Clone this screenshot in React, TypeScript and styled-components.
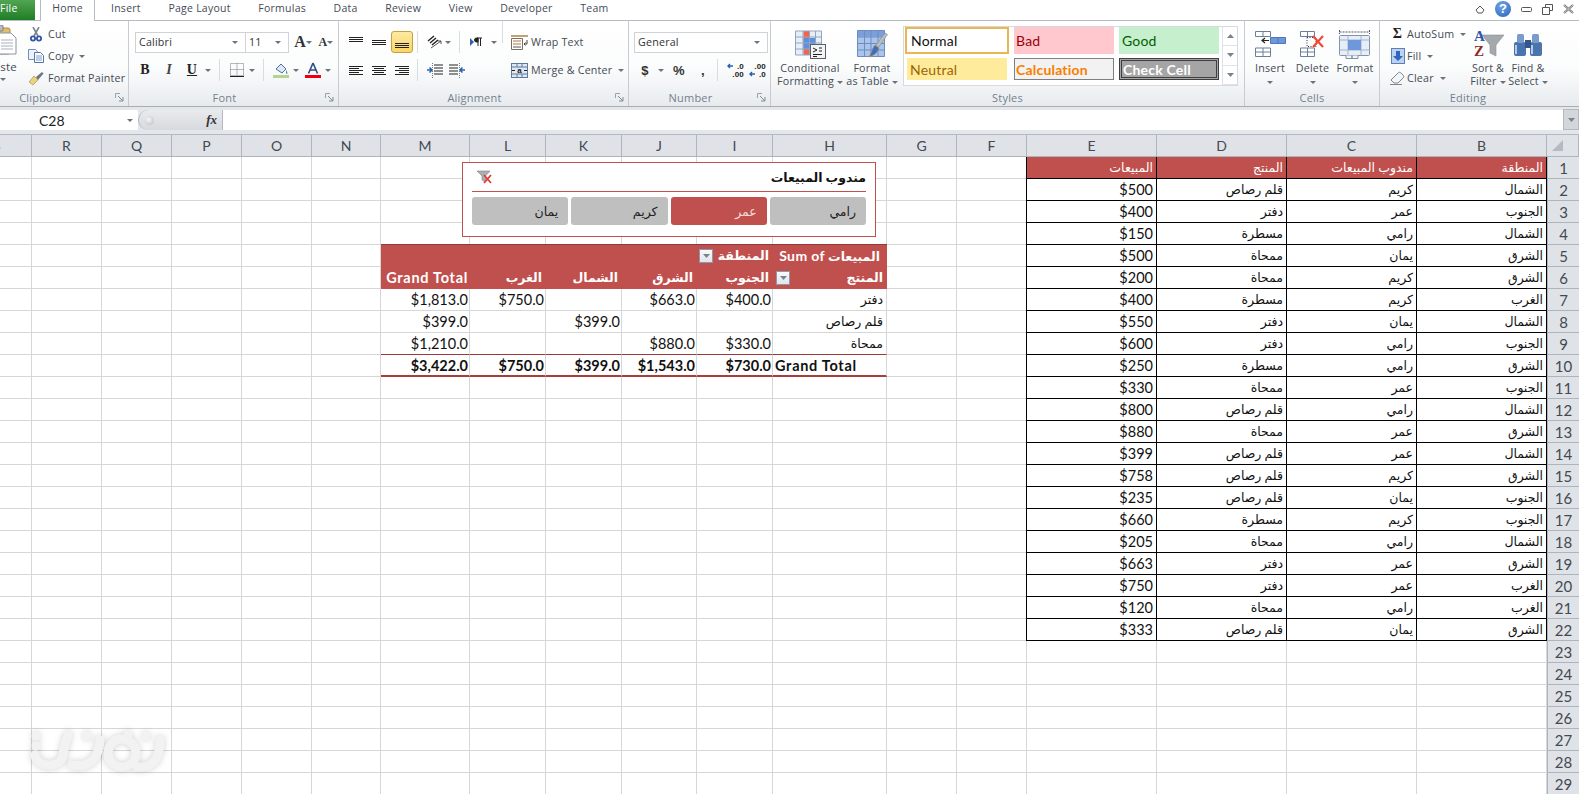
import React from "react"
import styled, { createGlobalStyle } from "styled-components"

const GlobalStyle = createGlobalStyle`
  html, body {
    margin: 0;
    height: 100%;
    overflow: hidden;
    background: #fff;
    font-family: "Open Sans", "Noto Sans", sans-serif;
  }
`

const Window = styled.div`
  width: 1579px;
  height: 794px;
  overflow: hidden;
  display: flex;
  flex-direction: column;
  color: #444b55;
`

/* ---------- tabs ---------- */
const TabBar = styled.div`
  height: 21px;
  flex: none;
  box-sizing: border-box;
  display: flex;
  align-items: stretch;
  border-bottom: 1px solid #b7bcc3;
  font-size: 10.5px;
  letter-spacing: 0.25px;
`
const FileTab = styled.div`
  width: 35px;
  height: 20px;
  color: #fff;
  line-height: 17px;
  background: linear-gradient(#53a553, #1e7d25);
  margin-right: 5px;
`
const HomeTab = styled.div`
  width: 55px;
  height: 21px;
  box-sizing: border-box;
  text-align: center;
  line-height: 17px;
  background: #fff;
  border: 1px solid #b7bcc3;
  border-top: none;
  border-bottom: none;
  margin-right: 16px;
`
const TabList = styled.div`
  display: flex;
  gap: 27.6px;
  line-height: 17px;
`
const WindowControls = styled.div`
  margin-left: auto;
  display: flex;
  align-items: center;
  gap: 10px;
  padding-right: 5px;
  height: 18px;
`
const HelpBadge = styled.div`
  width: 16px;
  height: 16px;
  border-radius: 50%;
  background: radial-gradient(circle at 40% 30%, #6fa5e6, #2a63b8);
  color: #fff;
  font: bold 13px/16px "Liberation Sans", sans-serif;
  text-align: center;
`

/* ---------- ribbon ---------- */
const Ribbon = styled.div`
  height: 86px;
  flex: none;
  display: flex;
  background: linear-gradient(#fff 0%, #fbfcfc 55%, #e8ebee 100%);
  border-bottom: 1px solid #a9adb2;
  box-sizing: border-box;
  font-size: 10.7px;
  letter-spacing: 0.2px;
`
const Group = styled.div<{ $w: number; $ml?: number; $last?: boolean }>`
  width: ${({ $w }) => $w}px;
  margin-left: ${({ $ml }) => $ml ?? 0}px;
  flex: none;
  box-sizing: border-box;
  display: flex;
  flex-direction: column;
  border-right: ${({ $last }) => ($last ? "none" : "1px solid #c8ccd2")};
`
const GroupBody = styled.div`
  flex: 1;
  display: flex;
  min-height: 0;
`
const GroupFoot = styled.div`
  height: 17px;
  flex: none;
  display: flex;
  align-items: center;
  color: #73808f;
  font-size: 11px;
`
const FootLabel = styled.div`
  flex: 1;
  text-align: center;
`
const Launcher = styled.div`
  width: 18px;
  display: flex;
  justify-content: center;
`
const StackRows = styled.div<{ $pl?: number; $w?: number }>`
  padding: 10px 0 0 ${({ $pl }) => $pl ?? 6}px;
  width: ${({ $w }) => ($w ? `${$w}px` : "auto")};
  box-sizing: border-box;
  display: flex;
  flex-direction: column;
  gap: 6px;
  flex: none;
`
const ToolRow = styled.div`
  height: 22px;
  display: flex;
  align-items: center;
`
const Slot = styled.div<{ $w: number; $ml?: number; $active?: boolean }>`
  width: ${({ $w }) => $w}px;
  height: 22px;
  margin-left: ${({ $ml }) => $ml ?? 0}px;
  box-sizing: border-box;
  flex: none;
  display: flex;
  align-items: center;
  justify-content: center;
  border-radius: 3px;
  border: ${({ $active }) => ($active ? "1px solid #c2a045" : "none")};
  background: ${({ $active }) => ($active ? "linear-gradient(#fde9a3, #fbd564)" : "none")};
`
const Sep = styled.div<{ $ml?: number }>`
  width: 1px;
  height: 22px;
  flex: none;
  background: #d9dde1;
  margin-left: ${({ $ml }) => $ml ?? 0}px;
`
const Arrow = styled.i<{ $ml?: number }>`
  display: inline-block;
  flex: none;
  width: 0;
  height: 0;
  margin-left: ${({ $ml }) => $ml ?? 0}px;
  border-left: 3px solid transparent;
  border-right: 3px solid transparent;
  border-top: 3px solid #6a727c;
  vertical-align: middle;
`
const Combo = styled.div<{ $w: number }>`
  width: ${({ $w }) => $w}px;
  height: 21px;
  box-sizing: border-box;
  flex: none;
  display: flex;
  align-items: center;
  justify-content: space-between;
  padding: 0 7px 0 3px;
  border: 1px solid #cfd3d9;
  margin-right: -1px;
  background: #fff;
  color: #333;
  font-size: 10.7px;
`
const GlyphBold = styled.span`
  font: bold 14px "Liberation Serif", serif;
  color: #222;
`
const GlyphItalic = styled(GlyphBold)`
  font-style: italic;
  color: #444;
`
const GlyphUnderline = styled(GlyphBold)`
  text-decoration: underline;
`
const GrowA = styled.span<{ $size: number }>`
  font: bold ${({ $size }) => $size}px "Liberation Serif", serif;
  color: #333;
`
const NumberGlyph = styled.span`
  font: bold 13px "Liberation Sans", sans-serif;
  color: #333;
`
const PasteCol = styled.div`
  width: 32px;
  margin-left: 5px;
  padding-top: 4px;
  flex: none;
  display: flex;
  flex-direction: column;
  align-items: flex-end;
  overflow: hidden;
`
const PasteLabel = styled.div`
  margin-top: 5px;
  line-height: 14px;
  font-size: 11.5px;
`
const PasteArrow = styled.div`
  width: 100%;
  text-align: right;
  padding-right: 11px;
  box-sizing: border-box;
  line-height: 8px;
`
const SmallList = styled.div<{ $ml?: number; $w?: number }>`
  margin-left: ${({ $ml }) => $ml ?? 0}px;
  width: ${({ $w }) => ($w ? `${$w}px` : "auto")};
  padding-top: 2px;
  flex: none;
  display: flex;
  flex-direction: column;
`
const SmallItem = styled.div`
  height: 22px;
  display: flex;
  align-items: center;
  white-space: nowrap;
`
const ItemIcon = styled.div<{ $w: number }>`
  width: ${({ $w }) => $w}px;
  flex: none;
  display: flex;
  justify-content: center;
`
const BlockRight = styled.div`
  padding: 10px 0 0 8px;
  display: flex;
  flex-direction: column;
  gap: 6px;
`
const LongItem = styled.div`
  height: 22px;
  display: flex;
  align-items: center;
  gap: 3px;
  white-space: nowrap;
`
const LargeButton = styled.div<{ $w: number }>`
  width: ${({ $w }) => $w}px;
  flex: none;
  display: flex;
  flex-direction: column;
  align-items: center;
  padding-top: 5px;
`
const LargeIcon = styled.div`
  height: 36px;
  display: flex;
  align-items: center;
`
const LargeLabel = styled.div`
  text-align: center;
  line-height: 13px;
  white-space: nowrap;
`
const Gallery = styled.div`
  width: 335px;
  height: 60px;
  margin-top: 5px;
  box-sizing: border-box;
  flex: none;
  display: flex;
  border: 1px solid #d6dade;
  background: #fff;
`
const GalleryGrid = styled.div`
  flex: 1;
  display: grid;
  grid-template-columns: 104px 100px 100px;
  grid-template-rows: 27px 22px;
  gap: 4px 5px;
  padding: 0 0 0 1px;
`
const GalleryCell = styled.div<{ $bg: string; $fg: string; $pad: number; $edge?: string; $bold?: boolean; $inset?: boolean }>`
  box-sizing: border-box;
  padding-left: ${({ $pad }) => $pad}px;
  margin: ${({ $inset }) => ($inset ? "0 2px" : "0")};
  display: flex;
  align-items: center;
  background: ${({ $bg }) => $bg};
  color: ${({ $fg }) => $fg};
  border: ${({ $edge }) => $edge ?? "none"};
  font: ${({ $bold }) => ($bold ? "bold" : "normal")} 14px Lato, sans-serif;
`
const GalleryScroll = styled.div`
  width: 14px;
  flex: none;
  display: flex;
  flex-direction: column;
  border-left: 1px solid #dfe2e6;
`
const ScrollPart = styled.div`
  height: 20px;
  display: flex;
  align-items: center;
  justify-content: center;
  border-bottom: 1px solid #dfe2e6;
`

/* ---------- formula bar ---------- */
const FormulaBar = styled.div`
  height: 28px;
  flex: none;
  box-sizing: border-box;
  padding: 3px 0 4px;
  display: flex;
  background: #e3e6ea;
  border-bottom: 1px solid #b4b9bf;
`
const NameBox = styled.div`
  width: 138px;
  flex: none;
  background: #fff;
  display: flex;
  align-items: center;
  justify-content: space-between;
  padding: 0 5px 0 39px;
  box-sizing: border-box;
  font: 14px Lato, sans-serif;
  color: #222;
`
const FxZone = styled.div`
  width: 85px;
  flex: none;
  box-sizing: border-box;
  background: linear-gradient(#e9ebee, #d6d9dd);
  border-radius: 10px 0 0 10px;
  border-left: 1px solid #b4b9bf;
  border-right: 1px solid #b4b9bf;
  display: flex;
  align-items: center;
  justify-content: space-between;
  padding: 0 5px 0 6px;
`
const FxKnob = styled.div`
  width: 9px;
  height: 9px;
  border-radius: 50%;
  background: radial-gradient(circle at 40% 40%, #f8f8f8, #b5b8bc);
`
const FxText = styled.span`
  font: italic bold 13px "Liberation Serif", serif;
  color: #333;
`
const FormulaInput = styled.div`
  flex: 1;
  background: #fff;
`
const FormulaDrop = styled.div`
  width: 16px;
  flex: none;
  margin-top: -1px;
  background: #d3d7dc;
  border: 1px solid #b4b9bf;
  box-sizing: border-box;
  display: flex;
  align-items: center;
  justify-content: center;
`

/* ---------- sheet ---------- */
const Sheet = styled.div`
  position: relative;
  flex: 1;
  overflow: hidden;
`
const Grid = styled.div<{ $cols: string }>`
  display: grid;
  grid-template-columns: ${({ $cols }) => $cols};
  grid-template-rows: 22px;
  grid-auto-rows: 22px;
  font: 14.5px Lato, "DejaVu Sans", sans-serif;
  color: #111;
`
const ColHead = styled.div<{ $edge?: boolean }>`
  box-sizing: border-box;
  background: #dfe3e8;
  border-right: 1px solid #aeb4bb;
  border-bottom: 1px solid #aeb4bb;
  display: flex;
  align-items: center;
  justify-content: ${({ $edge }) => ($edge ? "flex-start" : "center")};
  text-indent: ${({ $edge }) => ($edge ? "-7px" : "0")};
  color: #45494f;
  font-size: 14px;
  overflow: hidden;
`
const Corner = styled(ColHead)`
  justify-content: flex-start;
  padding-left: 5px;
`
const RowHead = styled.div`
  box-sizing: border-box;
  background: #dfe3e8;
  border-bottom: 1px solid #aeb4bb;
  border-left: 1px solid #aeb4bb;
  display: flex;
  align-items: center;
  justify-content: center;
  color: #45494f;
  font-size: 15px;
`
type Tone = "plain" | "data" | "dataHead" | "pivotHead" | "pivotTop" | "pivotRule" | "pivotTotal"

const bg = (t: Tone) => (t === "dataHead" || t === "pivotHead" || t === "pivotTop" ? "#c0504d" : "#fff")
const rightLine = (t: Tone) => {
  if (t === "data" || t === "dataHead") return "#000"
  if (t === "pivotHead" || t === "pivotTop") return "#c0504d"
  return "#d6d6d6"
}
const bottomLine = (t: Tone) => {
  if (t === "data" || t === "dataHead") return "1px solid #000"
  if (t === "pivotHead" || t === "pivotTop") return "1px solid #c0504d"
  if (t === "pivotRule") return "1px solid #9c3a38"
  if (t === "pivotTotal") return "2px solid #a53f3c"
  return "1px solid #d6d6d6"
}

const Cell = styled.div<{ $tone: Tone; $left?: boolean; $edge?: boolean; $ar?: boolean; $bold?: boolean; $wide?: boolean }>`
  box-sizing: border-box;
  min-width: 0;
  display: flex;
  align-items: center;
  justify-content: ${({ $left }) => ($left ? "flex-start" : "flex-end")};
  padding: 0 ${({ $ar, $tone }) => ($ar || $tone === "data" ? 3 : 1)}px 0 2px;
  white-space: nowrap;
  background: ${({ $tone }) => bg($tone)};
  color: ${({ $tone }) => ($tone === "dataHead" || $tone === "pivotHead" || $tone === "pivotTop" ? "#fff" : "#111")};
  border-right: 1px solid ${({ $tone }) => rightLine($tone)};
  border-bottom: ${({ $tone }) => bottomLine($tone)};
  box-shadow: ${({ $edge, $tone }) =>
    $edge ? ($tone === "pivotTop" ? "0 -1px 0 #953735" : "-1px 0 0 #000") : "none"};
  font-size: ${({ $ar }) => ($ar ? "12.5px" : "14.5px")};
  font-weight: ${({ $bold, $tone }) => ($bold || $tone === "pivotTotal" ? 700 : 400)};
  letter-spacing: ${({ $wide }) => ($wide ? "0.7px" : "0")};
`
const SumLatin = styled.span`
  font-size: 14px;
  letter-spacing: 0.4px;
`
const FilterButton = styled.span<{ $inset: number }>`
  width: 14px;
  height: 14px;
  margin-left: ${({ $inset }) => $inset}px;
  margin-right: auto;
  flex: none;
  box-sizing: border-box;
  background: linear-gradient(#f8fafc, #dfe5ec);
  border: 1px solid #8d99a8;
  display: flex;
  align-items: center;
  justify-content: center;
`

const Slicer = styled.div`
  position: absolute;
  left: 462px;
  top: 27px;
  width: 414px;
  height: 75px;
  box-sizing: border-box;
  background: #fff;
  border: 1px solid #c0504d;
  padding: 0 9px;
  display: flex;
  flex-direction: column;
  font-family: Lato, "DejaVu Sans", sans-serif;
`
const SlicerHead = styled.div`
  height: 29px;
  flex: none;
  box-sizing: border-box;
  border-bottom: 1px solid #c0504d;
  display: flex;
  align-items: center;
  justify-content: space-between;
  padding: 0 0 0 5px;
  font-size: 12.5px;
  font-weight: 700;
  color: #111;
`
const SlicerButtons = styled.div`
  margin-top: 5px;
  display: grid;
  grid-template-columns: repeat(4, 1fr);
  gap: 3px;
`
const SlicerButton = styled.div<{ $on?: boolean }>`
  height: 28px;
  border-radius: 3px;
  display: flex;
  align-items: center;
  justify-content: flex-end;
  padding-right: 10px;
  font-size: 12.5px;
  background: ${({ $on }) => ($on ? "#c0504d" : "#bfbfbf")};
  color: ${({ $on }) => ($on ? "#f6dcdb" : "#222")};
`
const Watermark = styled.svg`
  position: absolute;
  left: 26px;
  top: 585px;
  filter: drop-shadow(0 0 3px rgba(0, 0, 0, 0.18));
`

/* ---------- icons ---------- */
const PasteIcon = () => (
  <svg width="32" height="30" viewBox="0 0 32 30">
    <rect x="1" y="3" width="24" height="26" rx="2" fill="#e3bd6b" stroke="#a98a4a" />
    <rect x="8" y="0" width="10" height="6" rx="1" fill="#b9bcc2" stroke="#7d8087" />
    <path d="M13 8h13l5 5v16H13z" fill="#fff" stroke="#8b94a1" />
    <path d="M16 15h12M16 18h12M16 21h12M16 24h12" stroke="#a9b1bd" />
  </svg>
)
const CutIcon = () => (
  <svg width="12" height="15" viewBox="0 0 12 15">
    <path d="M3 0l5 9M9 0L4 9" stroke="#7b8490" strokeWidth="1.6" />
    <circle cx="3" cy="11.5" r="2.1" fill="none" stroke="#2f56a8" strokeWidth="1.8" />
    <circle cx="9" cy="11.5" r="2.1" fill="none" stroke="#2f56a8" strokeWidth="1.8" />
  </svg>
)
const CopyIcon = () => (
  <svg width="16" height="14" viewBox="0 0 16 14">
    <path d="M.5.5h7l2 2v8h-9z" fill="#eef3fa" stroke="#6f8fbb" />
    <path d="M6.5 3.5h6l3 3v7h-9z" fill="#fff" stroke="#5277ad" />
    <path d="M8 7h6M8 9h6M8 11h6" stroke="#7f9cc6" />
  </svg>
)
const BrushIcon = () => (
  <svg width="16" height="15" viewBox="0 0 16 15">
    <path d="M1 11l5-6 4 4-5 5z" fill="#ecd27c" stroke="#a9945a" strokeWidth=".7" />
    <path d="M8 6l6-5 1.5 1.5L10 9z" fill="#6d7680" />
  </svg>
)
const Launch = () => (
  <svg width="9" height="9" viewBox="0 0 9 9">
    <path d="M.5 5V.5H5" fill="none" stroke="#9aa3ad" />
    <path d="M3 3l4.5 4.5M8 4v4H4" fill="none" stroke="#7f8994" />
  </svg>
)
const Lines = ({ rows, w = 14, h = 14 }: { rows: number[][]; w?: number; h?: number }) => (
  <svg width={w} height={h} viewBox={`0 0 ${w} ${h}`}>
    {rows.map(([a, b, y]) => (
      <path key={`${a}-${y}`} d={`M${a} ${y + 0.5}H${b}`} stroke="#222" />
    ))}
  </svg>
)
const BordersIcon = () => (
  <svg width="14" height="14" viewBox="0 0 14 14">
    <path d="M.5.5h13v12H.5zM7 .5v12M.5 6.5h13" fill="none" stroke="#777" strokeDasharray="1 1" />
    <path d="M0 13.5h14" stroke="#222" />
  </svg>
)
const FillIcon = () => (
  <svg width="17" height="16" viewBox="0 0 17 16">
    <path d="M3 7l5-5 5 5-4 4z" fill="#dfe9f6" stroke="#4a6ea5" />
    <path d="M13 8c1 2 2 3 1 4-1 0-1-2-1-4z" fill="#3c6fb7" />
    <rect x="0" y="13" width="16" height="3.5" fill="#b6d48f" />
  </svg>
)
const FontColorIcon = () => (
  <svg width="16" height="16" viewBox="0 0 16 16">
    <path d="M8 1L3.5 11.5M8 1l4.5 10.5M5.3 8h5.4" fill="none" stroke="#2b4d86" strokeWidth="1.6" />
    <rect x="0" y="13" width="16" height="3.5" fill="#f0000f" />
  </svg>
)
const OrientIcon = () => (
  <svg width="16" height="14" viewBox="0 0 16 14">
    <path d="M1 6l6-5M3 8l6-5M5 10l6-5" stroke="#222" strokeWidth="1.4" />
    <path d="M4 13l10-7M14 6h-3M14 6v3" fill="none" stroke="#555" />
  </svg>
)
const RtlIcon = () => (
  <svg width="13" height="10" viewBox="0 0 13 10">
    <path d="M0 1l4 4-4 4z" fill="#2a5fb0" />
    <path d="M8 1H6.5a2 2 0 0 0 0 4H8zM8 1v8M10.5 1v8M7 1h5" fill="#222" stroke="#222" />
  </svg>
)
const IndentIcon = ({ flip }: { flip?: boolean }) => (
  <svg width="16" height="15" viewBox="0 0 16 15" style={flip ? { transform: "scaleX(-1)" } : undefined}>
    <path d="M7 2h9M7 5h9M7 8h9M7 11h9" stroke="#222" />
    <path d="M0 7h4M2.5 4.5L5 7 2.5 9.5" fill="none" stroke="#2a5fb0" strokeWidth="1.5" />
    <path d="M5.5 0v15" stroke="#777" strokeDasharray="1 1" />
  </svg>
)
const WrapIcon = () => (
  <svg width="17" height="15" viewBox="0 0 17 15">
    <path d="M.5 3.5h11v11H.5z" fill="#fff" stroke="#7c6f5f" />
    <path d="M0 1h17" stroke="#a47a3a" strokeWidth="1.4" />
    <path d="M2 6h8M2 9h8" stroke="#b5773b" />
    <path d="M2 12h8" stroke="#556" />
    <path d="M16 5v4h-3M14.5 7.5L13 9l1.500 1.500" fill="none" stroke="#444" />
  </svg>
)
const MergeIcon = () => (
  <svg width="17" height="15" viewBox="0 0 17 15">
    <rect x=".5" y=".5" width="16" height="14" fill="#dfe8f4" stroke="#5c7a9f" />
    <path d="M.5 4h16M.5 11h16M6 .5V4M11 .5V4M6 11v3.500M11 11v3.500" stroke="#5c7a9f" />
    <text x="8.500" y="10" textAnchor="middle" fontSize="8" fontWeight="700" fontFamily="Liberation Sans" fill="#222">a</text>
    <path d="M1 7.500h3M16 7.500h-3" stroke="#222" />
  </svg>
)
const DecimalIcon = ({ up }: { up?: boolean }) => (
  <svg width="17" height="16" viewBox="0 0 17 16">
    <text x="17" y="7" textAnchor="end" fontSize="8" fontWeight="700" fontFamily="Liberation Sans" fill="#222">{up ? ".00" : ".0"}</text>
    <text x="17" y="15" textAnchor="end" fontSize="8" fontWeight="700" fontFamily="Liberation Sans" fill="#222">{up ? ".0" : ".00"}</text>
    <path d={up ? "M1 12h5M3 10l-2 2 2 2" : "M1 4h5M3 2L1 4l2 2"} fill="none" stroke="#2a5fb0" strokeWidth="1.4" />
  </svg>
)
const CondFormatIcon = () => (
  <svg width="31" height="29" viewBox="0 0 31 29">
    <path d="M.5 1h26v24H.5z" fill="#e6eef8" />
    <rect x="8.500" y="1" width="6" height="24" fill="#f3644c" />
    <rect x="8.500" y="8" width="12" height="11" fill="#5f8fdc" />
    <path d="M.5 1h26v24H.5zM.5 7h26M.5 13h26M.5 19h26M8 1v24M14.500 1v24M20.500 1v24" fill="none" stroke="#93a6bf" />
    <rect x="15.500" y="14.500" width="15" height="14" fill="#f3f4f6" stroke="#56606c" />
    <path d="M18 18l4 2-4 2M27 18h-3M27 21h-3M18 24.500l9 0M18 26.500l4 0" fill="none" stroke="#222" />
  </svg>
)
const TableBrushIcon = () => (
  <svg width="31" height="28" viewBox="0 0 31 28">
    <path d="M.5.500h27v26H.5z" fill="#a9c4ee" />
    <path d="M.5.500h27v6H.5z" fill="#7b9fdc" />
    <path d="M.5.500h27v26H.5zM.5 7h27M.5 13.500h27M.5 20h27M7.500.500v26M14 .500v26M21 .500v26" fill="none" stroke="#6f8db8" />
    <path d="M28 3l2.500 1.500-9 13-3-2z" fill="#b9bec4" stroke="#7b838c" strokeWidth=".6" />
    <path d="M18 15l4 3c-1 5-6 8-10 9 2-3 3-9 6-12z" fill="#3f6fc0" stroke="#b49a55" strokeWidth=".8" />
  </svg>
)
const InsertIcon = () => (
  <svg width="31" height="26" viewBox="0 0 31 26">
    <path d="M.5.500h15v5H.5zM8 .500v5M.5 17h15v8.500H.5zM8 17v8.500M.5 21h15" fill="#fff" stroke="#6a7f99" />
    <path d="M15.500 6.500h15v6h-15zM23 6.500v6" fill="#6f97dc" stroke="#5276b5" />
    <path d="M7 9.500h7M10 7l-3 2.500 3 2.500" fill="none" stroke="#222" strokeWidth="1.2" />
  </svg>
)
const DeleteIcon = () => (
  <svg width="25" height="26" viewBox="0 0 25 26">
    <path d="M.5.500h14v5H.5zM7.500.500v5M.5 17h14v8.500H.5zM7.500 17v8.500M.5 21h14" fill="#fff" stroke="#6a7f99" />
    <path d="M7 6.500h9v9H7z" fill="none" stroke="#333" strokeDasharray="1 1.500" />
    <path d="M13 5l10 11M23 5L13 16" stroke="#ed4a3a" strokeWidth="2.200" />
  </svg>
)
const FormatIcon = () => (
  <svg width="32" height="30" viewBox="0 0 32 30">
    <path d="M.5 3h30M.5 1v4M30.500 1v4" stroke="#556" strokeDasharray="2 1" />
    <rect x=".5" y="6.500" width="30" height="20" rx="1" fill="#e6eef8" stroke="#8093ab" />
    <path d="M.5 11h30M.5 21h30M9 6.500v20M22 6.500v20" stroke="#a4b4c8" />
    <rect x="9" y="11" width="13" height="10" fill="#6f97dc" />
    <path d="M7 26.500v3h6v-3M13 26.500v3h6v-3" fill="#f2f4f7" stroke="#8093ab" />
  </svg>
)
const FillDownIcon = () => (
  <svg width="14" height="16" viewBox="0 0 14 16">
    <rect x=".5" y=".5" width="13" height="15" fill="#bcd2f0" stroke="#5b7fb6" />
    <path d="M5 3h4v5h3l-5 5-5-5h3z" fill="#2f67c0" />
  </svg>
)
const EraserIcon = () => (
  <svg width="15" height="14" viewBox="0 0 15 14">
    <path d="M1 9l7-7c1-1 2-1 3 0l2 2c1 1 1 2 0 3l-5 5H4z" fill="#f3f4f6" stroke="#7d8793" />
    <path d="M0 13.500h12" stroke="#7d8793" />
  </svg>
)
const SortIcon = () => (
  <svg width="31" height="30" viewBox="0 0 31 30">
    <path d="M9 6h22l-8 10v11l-6-3v-8z" fill="#a4a9ae" stroke="#8c9196" strokeWidth=".6" />
    <text x="1" y="12" fontSize="15" fontWeight="700" fontFamily="Liberation Serif" fill="#2f56a8">A</text>
    <text x="1" y="27" fontSize="15" fontWeight="700" fontFamily="Liberation Serif" fill="#8d2a2a">Z</text>
  </svg>
)
const BinocularIcon = () => (
  <svg width="28" height="26" viewBox="0 0 28 26">
    <rect x="0" y="11" width="12" height="14" rx="2" fill="#4a74ad" />
    <rect x="16" y="11" width="12" height="14" rx="2" fill="#4a74ad" />
    <rect x="3" y="3" width="7" height="9" rx="1.500" fill="#7a9ccc" />
    <rect x="18" y="3" width="7" height="9" rx="1.500" fill="#7a9ccc" />
    <rect x="11" y="9" width="6" height="8" fill="#33558a" />
    <path d="M2 14v9M18 14v9" stroke="#b5cbe8" strokeWidth="2" />
  </svg>
)
const NoFilterIcon = () => (
  <svg width="15" height="14" viewBox="0 0 15 14">
    <path d="M0 1h13L8.500 6v6L5 10V6z" fill="#aab0b6" stroke="#7d8389" strokeWidth=".6" />
    <path d="M7 5l7 8M14 5l-7 8" stroke="#e23b2e" strokeWidth="1.800" />
  </svg>
)
const SmallChevron = ({ up }: { up?: boolean }) => (
  <svg width="9" height="6" viewBox="0 0 9 6">
    <path d={up ? "M4.500 1L1 5h7z" : "M4.500 5L1 1h7z"} fill="#7a828c" />
  </svg>
)
const RibbonCollapse = () => (
  <svg width="10" height="9" viewBox="0 0 10 9">
    <path d="M1 5l4-4 4 4-2 3H3z" fill="none" stroke="#555" />
  </svg>
)
const MinIcon = () => (
  <svg width="11" height="7" viewBox="0 0 11 7">
    <rect x=".5" y="1.500" width="10" height="4" rx="1" fill="#fff" stroke="#555" />
  </svg>
)
const RestoreIcon = () => (
  <svg width="11" height="11" viewBox="0 0 11 11">
    <path d="M3.500.5h7v6h-7z" fill="#fff" stroke="#555" />
    <path d="M.5 3.500h7v7h-7z" fill="#fff" stroke="#555" />
  </svg>
)
const CloseIcon = () => (
  <svg width="11" height="10" viewBox="0 0 11 10">
    <path d="M1 1l9 8M10 1L1 9" stroke="#666" strokeWidth="2" />
    <path d="M1 1l9 8M10 1L1 9" stroke="#f4f4f4" strokeWidth=".7" />
  </svg>
)
const CornerMark = () => (
  <svg width="11" height="11" viewBox="0 0 11 11">
    <path d="M11 0v11H0z" fill="#b4bac1" />
  </svg>
)

/* ---------- data ---------- */
const columns: [string, number][] = [
  ["S", 32], ["R", 70], ["Q", 70], ["P", 70], ["O", 70], ["N", 69], ["M", 89], ["L", 76], ["K", 76], ["J", 75],
  ["I", 76], ["H", 114], ["G", 70], ["F", 70], ["E", 130], ["D", 130], ["C", 130], ["B", 130],
]

const sales: [string, string, string, number][] = [
  ["الشمال", "كريم", "قلم رصاص", 500],
  ["الجنوب", "عمر", "دفتر", 400],
  ["الشمال", "رامي", "مسطرة", 150],
  ["الشرق", "يمان", "ممحاة", 500],
  ["الشرق", "كريم", "ممحاة", 200],
  ["الغرب", "كريم", "مسطرة", 400],
  ["الشمال", "يمان", "دفتر", 550],
  ["الجنوب", "رامي", "دفتر", 600],
  ["الشرق", "رامي", "مسطرة", 250],
  ["الجنوب", "عمر", "ممحاة", 330],
  ["الشمال", "رامي", "قلم رصاص", 800],
  ["الشرق", "عمر", "ممحاة", 880],
  ["الشمال", "عمر", "قلم رصاص", 399],
  ["الشرق", "كريم", "قلم رصاص", 758],
  ["الجنوب", "يمان", "قلم رصاص", 235],
  ["الجنوب", "كريم", "مسطرة", 660],
  ["الشمال", "رامي", "ممحاة", 205],
  ["الشرق", "عمر", "دفتر", 663],
  ["الغرب", "عمر", "دفتر", 750],
  ["الغرب", "رامي", "ممحاة", 120],
  ["الشرق", "يمان", "قلم رصاص", 333],
]

const pivot: Record<string, Record<string, string>> = {
  "6": { H: "المنتج", I: "الجنوب", J: "الشرق", K: "الشمال", L: "الغرب", M: "Grand Total" },
  "7": { H: "دفتر", I: "$400.0", J: "$663.0", L: "$750.0", M: "$1,813.0" },
  "8": { H: "قلم رصاص", K: "$399.0", M: "$399.0" },
  "9": { H: "ممحاة", I: "$330.0", J: "$880.0", M: "$1,210.0" },
  "10": { H: "Grand Total", I: "$730.0", J: "$1,543.0", K: "$399.0", L: "$750.0", M: "$3,422.0" },
}
const pivotCols = "HIJKLM"

const isArabic = (s: string) => /[\u0600-\u06ff]/.test(s)

const renderCell = (col: string, row: number) => {
  const key = `${col}${row}`
  if ("BCDE".includes(col) && row <= 22) {
    const idx = "BCDE".indexOf(col)
    if (row === 1) {
      const heads = ["المنطقة", "مندوب المبيعات", "المنتج", "المبيعات"]
      return <Cell key={key} $tone="dataHead" $ar $edge={col === "E"}>{heads[idx]}</Cell>
    }
    const rec = sales[row - 2]
    const text = idx === 3 ? `$${rec[3]}` : (rec[idx] as string)
    return <Cell key={key} $tone="data" $ar={idx !== 3} $edge={col === "E"}>{text}</Cell>
  }
  if (pivotCols.includes(col) && row >= 5 && row <= 10) {
    if (row === 5) {
      return (
        <Cell key={key} $tone="pivotTop" $edge $bold $ar>
          {col === "I" && <FilterButton $inset={0}><SmallChevron /></FilterButton>}
          {col === "H" && <span><SumLatin>Sum of</SumLatin> المبيعات&nbsp;</span>}
          {col === "I" && "المنطقة"}
        </Cell>
      )
    }
    const text = pivot[String(row)][col] ?? ""
    const tone: Tone = row === 6 ? "pivotHead" : row === 9 ? "pivotRule" : row === 10 ? "pivotTotal" : "plain"
    return (
      <Cell
        key={key}
        $tone={tone}
        $bold={row === 6}
        $ar={isArabic(text)}
        $left={col === "H" && row === 10}
        $wide={text === "Grand Total"}
      >
        {col === "H" && row === 6 && <FilterButton $inset={1}><SmallChevron /></FilterButton>}
        {text}
      </Cell>
    )
  }
  return <Cell key={key} $tone="plain" />
}

const App = () => (
  <Window>
    <GlobalStyle />
    <TabBar>
      <FileTab>File</FileTab>
      <HomeTab>Home</HomeTab>
      <TabList>
        {["Insert", "Page Layout", "Formulas", "Data", "Review", "View", "Developer", "Team"].map((t) => (
          <span key={t}>{t}</span>
        ))}
      </TabList>
      <WindowControls>
        <RibbonCollapse />
        <HelpBadge>?</HelpBadge>
        <MinIcon />
        <RestoreIcon />
        <CloseIcon />
      </WindowControls>
    </TabBar>

    <Ribbon>
      <Group $w={149} $ml={-20}>
        <GroupBody>
          <PasteCol>
            <PasteIcon />
            <PasteLabel>Paste</PasteLabel>
            <PasteArrow><Arrow /></PasteArrow>
          </PasteCol>
          <SmallList $ml={9}>
            <SmallItem><ItemIcon $w={19}><CutIcon /></ItemIcon>&nbsp;Cut</SmallItem>
            <SmallItem><ItemIcon $w={19}><CopyIcon /></ItemIcon>&nbsp;Copy<Arrow $ml={5} /></SmallItem>
            <SmallItem><ItemIcon $w={19}><BrushIcon /></ItemIcon>&nbsp;Format Painter</SmallItem>
          </SmallList>
        </GroupBody>
        <GroupFoot><FootLabel>Clipboard</FootLabel><Launcher><Launch /></Launcher></GroupFoot>
      </Group>

      <Group $w={210}>
        <GroupBody>
          <StackRows>
            <ToolRow>
              <Combo $w={111}>Calibri<Arrow /></Combo>
              <Combo $w={44}>11<Arrow /></Combo>
              <Slot $w={16} $ml={7}><GrowA $size={16}>A</GrowA><Arrow /></Slot>
              <Slot $w={16} $ml={7}><GrowA $size={12}>A</GrowA><Arrow /></Slot>
            </ToolRow>
            <ToolRow>
              <Slot $w={20}><GlyphBold>B</GlyphBold></Slot>
              <Slot $w={20} $ml={4}><GlyphItalic>I</GlyphItalic></Slot>
              <Slot $w={20} $ml={3}><GlyphUnderline>U</GlyphUnderline></Slot>
              <Arrow $ml={3} />
              <Sep $ml={8} />
              <Slot $w={14} $ml={10}><BordersIcon /></Slot>
              <Arrow $ml={5} />
              <Sep $ml={8} />
              <Slot $w={17} $ml={9}><FillIcon /></Slot>
              <Arrow $ml={3} />
              <Slot $w={16} $ml={6}><FontColorIcon /></Slot>
              <Arrow $ml={4} />
            </ToolRow>
          </StackRows>
        </GroupBody>
        <GroupFoot><FootLabel>Font</FootLabel><Launcher><Launch /></Launcher></GroupFoot>
      </Group>

      <Group $w={290}>
        <GroupBody>
          <StackRows $w={163}>
            <ToolRow>
              <Slot $w={22}><Lines rows={[[0, 14, 2], [0, 14, 4], [0, 14, 6]]} /></Slot>
              <Slot $w={22} $ml={1}><Lines rows={[[0, 14, 5], [0, 14, 7], [0, 14, 9]]} /></Slot>
              <Slot $w={22} $ml={1} $active><Lines rows={[[0, 14, 8], [0, 14, 10], [0, 14, 12]]} /></Slot>
              <Sep $ml={4} />
              <Slot $w={16} $ml={9}><OrientIcon /></Slot>
              <Arrow $ml={2} />
              <Sep $ml={8} />
              <Slot $w={13} $ml={10}><RtlIcon /></Slot>
              <Arrow $ml={8} />
            </ToolRow>
            <ToolRow>
              <Slot $w={22}><Lines rows={[[0, 14, 3], [0, 10, 5], [0, 14, 7], [0, 10, 9], [0, 14, 11]]} /></Slot>
              <Slot $w={22} $ml={1}><Lines rows={[[0, 14, 3], [2, 12, 5], [0, 14, 7], [2, 12, 9], [0, 14, 11]]} /></Slot>
              <Slot $w={22} $ml={1}><Lines rows={[[0, 14, 3], [4, 14, 5], [0, 14, 7], [4, 14, 9], [0, 14, 11]]} /></Slot>
              <Sep $ml={4} />
              <Slot $w={16} $ml={9}><IndentIcon /></Slot>
              <Slot $w={16} $ml={6}><IndentIcon flip /></Slot>
            </ToolRow>
          </StackRows>
          <Sep />
          <BlockRight>
            <LongItem><WrapIcon />Wrap Text</LongItem>
            <LongItem><MergeIcon />Merge &amp; Center<Arrow $ml={3} /></LongItem>
          </BlockRight>
        </GroupBody>
        <GroupFoot><FootLabel>Alignment</FootLabel><Launcher><Launch /></Launcher></GroupFoot>
      </Group>

      <Group $w={142}>
        <GroupBody>
          <StackRows $pl={5}>
            <ToolRow><Combo $w={134}>General<Arrow /></Combo></ToolRow>
            <ToolRow>
              <Slot $w={20} $ml={1}><NumberGlyph>$</NumberGlyph></Slot>
              <Arrow $ml={3} />
              <Slot $w={20} $ml={5}><NumberGlyph>%</NumberGlyph></Slot>
              <Slot $w={20} $ml={4}><NumberGlyph>,</NumberGlyph></Slot>
              <Sep $ml={4} />
              <Slot $w={17} $ml={9}><DecimalIcon /></Slot>
              <Slot $w={17} $ml={5}><DecimalIcon up /></Slot>
            </ToolRow>
          </StackRows>
        </GroupBody>
        <GroupFoot><FootLabel>Number</FootLabel><Launcher><Launch /></Launcher></GroupFoot>
      </Group>

      <Group $w={474}>
        <GroupBody>
          <Slot $w={8} />
          <LargeButton $w={62}>
            <LargeIcon><CondFormatIcon /></LargeIcon>
            <LargeLabel>Conditional<br />Formatting<Arrow $ml={3} /></LargeLabel>
          </LargeButton>
          <LargeButton $w={62}>
            <LargeIcon><TableBrushIcon /></LargeIcon>
            <LargeLabel>Format<br />as Table<Arrow $ml={3} /></LargeLabel>
          </LargeButton>
          <Gallery>
            <GalleryGrid>
              <GalleryCell $pad={4} $bg="#fff" $fg="#111" $edge="2px solid #eab64f">Normal</GalleryCell>
              <GalleryCell $pad={2} $bg="#ffc7ce" $fg="#9c0006">Bad</GalleryCell>
              <GalleryCell $pad={3} $bg="#c6efce" $fg="#006100">Good</GalleryCell>
              <GalleryCell $pad={3} $bg="#ffeb9c" $fg="#9c6500" $inset>Neutral</GalleryCell>
              <GalleryCell $pad={1} $bg="#f2f2f2" $fg="#fa7d00" $edge="1px solid #7f7f7f" $bold>Calculation</GalleryCell>
              <GalleryCell $pad={1} $bg="#a5a5a5" $fg="#fff" $edge="3px double #3f3f3f" $bold>Check Cell</GalleryCell>
            </GalleryGrid>
            <GalleryScroll>
              <ScrollPart><SmallChevron up /></ScrollPart>
              <ScrollPart><SmallChevron /></ScrollPart>
              <ScrollPart><SmallChevron /></ScrollPart>
            </GalleryScroll>
          </Gallery>
        </GroupBody>
        <GroupFoot><FootLabel>Styles</FootLabel></GroupFoot>
      </Group>

      <Group $w={135}>
        <GroupBody>
          <Slot $w={4} />
          <LargeButton $w={42}>
            <LargeIcon><InsertIcon /></LargeIcon>
            <LargeLabel>Insert<br /><Arrow /></LargeLabel>
          </LargeButton>
          <LargeButton $w={43}>
            <LargeIcon><DeleteIcon /></LargeIcon>
            <LargeLabel>Delete<br /><Arrow /></LargeLabel>
          </LargeButton>
          <LargeButton $w={42}>
            <LargeIcon><FormatIcon /></LargeIcon>
            <LargeLabel>Format<br /><Arrow /></LargeLabel>
          </LargeButton>
        </GroupBody>
        <GroupFoot><FootLabel>Cells</FootLabel></GroupFoot>
      </Group>

      <Group $w={176} $last>
        <GroupBody>
          <SmallList $ml={8} $w={80}>
            <SmallItem><ItemIcon $w={19}><GlyphBold>Σ</GlyphBold></ItemIcon>AutoSum<Arrow $ml={6} /></SmallItem>
            <SmallItem><ItemIcon $w={19}><FillDownIcon /></ItemIcon>Fill<Arrow $ml={6} /></SmallItem>
            <SmallItem><ItemIcon $w={19}><EraserIcon /></ItemIcon>Clear<Arrow $ml={6} /></SmallItem>
          </SmallList>
          <LargeButton $w={40}>
            <LargeIcon><SortIcon /></LargeIcon>
            <LargeLabel>Sort &amp;<br />Filter<Arrow $ml={3} /></LargeLabel>
          </LargeButton>
          <LargeButton $w={40}>
            <LargeIcon><BinocularIcon /></LargeIcon>
            <LargeLabel>Find &amp;<br />Select<Arrow $ml={3} /></LargeLabel>
          </LargeButton>
        </GroupBody>
        <GroupFoot><FootLabel>Editing</FootLabel></GroupFoot>
      </Group>
    </Ribbon>

    <FormulaBar>
      <NameBox>C28<Arrow /></NameBox>
      <FxZone><FxKnob /><FxText>fx</FxText></FxZone>
      <FormulaInput />
      <FormulaDrop><SmallChevron /></FormulaDrop>
    </FormulaBar>

    <Sheet>
      <Grid $cols={`${columns.map(([, w]) => `${w}px`).join(" ")} 32px`}>
        {columns.map(([name]) => (
          <ColHead key={name} $edge={name === "S"}>{name}</ColHead>
        ))}
        <Corner><CornerMark /></Corner>
        {Array.from({ length: 29 }, (_, i) => i + 1).map((row) => (
          <React.Fragment key={row}>
            {columns.map(([name]) => renderCell(name, row))}
            <RowHead>{row}</RowHead>
          </React.Fragment>
        ))}
      </Grid>

      <Slicer>
        <SlicerHead>
          <NoFilterIcon />
          <span>مندوب المبيعات</span>
        </SlicerHead>
        <SlicerButtons>
          <SlicerButton>يمان</SlicerButton>
          <SlicerButton>كريم</SlicerButton>
          <SlicerButton $on>عمر</SlicerButton>
          <SlicerButton>رامي</SlicerButton>
        </SlicerButtons>
      </Slicer>

      <Watermark width="144" height="58" viewBox="0 0 144 58" fill="none" stroke="#f2f2f2" strokeWidth="9" strokeLinecap="round">
        <path d="M9 35c2 13 26 14 28 0 1-8 3-14 5-20" />
        <path d="M46 45c12 2 26 0 28-25" />
        <circle cx="96" cy="33" r="14" />
        <path d="M111 47c14 1 23-6 23-27" />
        <g fill="#f2f2f2" stroke="none">
          <circle cx="10" cy="16" r="4.500" />
          <circle cx="10" cy="26" r="4.500" />
          <circle cx="61" cy="16" r="4.500" />
          <circle cx="102" cy="15" r="4.500" />
          <circle cx="120" cy="16" r="4.500" />
        </g>
      </Watermark>
    </Sheet>
  </Window>
)

export default App
